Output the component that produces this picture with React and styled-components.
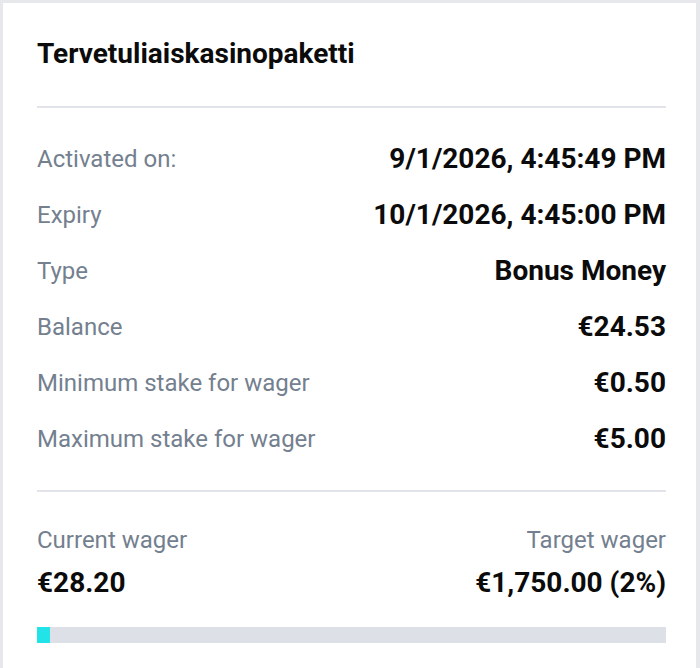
import React from "react";
import styled, { createGlobalStyle } from "styled-components";

const Global = createGlobalStyle`
  html, body { margin: 0; padding: 0; background: #e6e8ec; }
  body { font-family: Roboto, "Liberation Sans", sans-serif; }
  #root { padding: 3px 4px 0 3px; }
`;

const Card = styled.section`
  background: #ffffff;
  padding: 36px 30px 30px 34px;
  min-height: 640px;
  box-sizing: border-box;
`;

const Title = styled.h2`
  margin: 0;
  font-size: 28px;
  line-height: 30px;
  font-weight: 700;
  color: #0b0b0b;
`;

const Divider = styled.hr`
  border: 0;
  height: 2px;
  background: #e1e4e8;
  margin: ${(p) => p.$top}px 0 0;
`;

const Rows = styled.div`
  display: flex;
  flex-direction: column;
  padding: 23px 0 23px;
`;

const Row = styled.div`
  display: flex;
  align-items: center;
  justify-content: space-between;
  height: 56px;
`;

const Label = styled.span`
  font-size: 24px;
  line-height: 28px;
  color: #747f8f;
`;

const Value = styled.span`
  font-size: 28px;
  line-height: 30px;
  font-weight: 700;
  color: #0b0b0b;
`;

const Wager = styled.div`
  display: grid;
  grid-template-columns: 1fr 1fr;
  row-gap: 14px;
  margin-top: 34px;
`;

const WLabel = styled(Label)`
  text-align: ${(p) => (p.$right ? "right" : "left")};
`;

const WValue = styled(Value)`
  text-align: ${(p) => (p.$right ? "right" : "left")};
`;

const Track = styled.div`
  margin-top: 29px;
  height: 16px;
  background: #dde0e6;
`;

const Fill = styled.div`
  height: 100%;
  background: #22e4e8;
`;

const rows = [
  ["Activated on:", "9/1/2026, 4:45:49 PM"],
  ["Expiry", "10/1/2026, 4:45:00 PM"],
  ["Type", "Bonus Money"],
  ["Balance", "€24.53"],
  ["Minimum stake for wager", "€0.50"],
  ["Maximum stake for wager", "€5.00"],
];

export default function App() {
  const pct = 2;
  return (
    <>
      <Global />
      <Card>
        <Title>Tervetuliaiskasinopaketti</Title>
        <Divider $top={37} />
        <Rows>
          {rows.map(([l, v]) => (
            <Row key={l}>
              <Label>{l}</Label>
              <Value>{v}</Value>
            </Row>
          ))}
        </Rows>
        <Divider $top={0} />
        <Wager>
          <WLabel>Current wager</WLabel>
          <WLabel $right>Target wager</WLabel>
          <WValue>€28.20</WValue>
          <WValue $right>€1,750.00 (2%)</WValue>
        </Wager>
        <Track>
          <Fill style={{ width: `${pct}%` }} />
        </Track>
      </Card>
    </>
  );
}
